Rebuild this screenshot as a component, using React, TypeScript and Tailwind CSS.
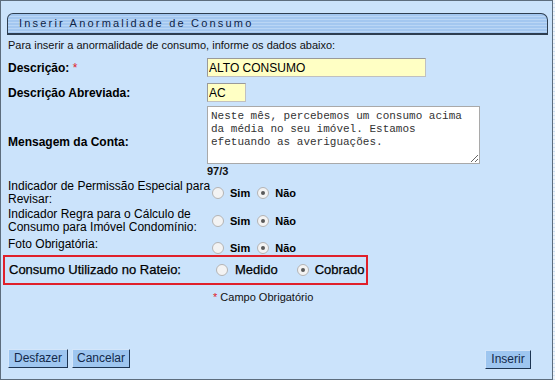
import React from 'react';

const font = "font-['Liberation_Sans',Arial,sans-serif]";

const Radio: React.FC<{ checked?: boolean }> = ({ checked }) => (
  <span className="ml-[5px] w-[12px] h-[12px] rounded-full border border-[#b4b4b4] bg-[#f3f3f3] flex items-center justify-center shrink-0">
    {checked && <span className="w-[4px] h-[4px] rounded-full bg-[#5a5a5a]" />}
  </span>
);

const SimNao: React.FC = () => (
  <div className="flex items-center text-[11px] font-bold text-black">
    <Radio />
    <span className="ml-[6px]">Sim</span>
    <span className="ml-[2px]"><Radio checked /></span>
    <span className="ml-[6px]">Não</span>
  </div>
);

const Button: React.FC<{ label: string; width: string }> = ({ label, width }) => (
  <button
    className={`${width} h-[19px] bg-[#9ec6f0] border border-t-[#d4e6fa] border-l-[#d4e6fa] border-b-[#1d3552] border-r-[#1d3552] text-[12px] text-[#13294a] leading-none`}
  >
    {label}
  </button>
);

const App: React.FC = () => {
  return (
    <div className={`w-[555px] h-[386px] bg-white flex ${font}`}>
      <div className="w-[553px] h-[380px] border border-[#5d6d7d] bg-[#cbe3fb] flex flex-col">
        {/* Header */}
        <div className="ml-[6px] mr-[4px] mt-[12px] h-[22px] rounded-tl-[6px] rounded-tr-[7px] border border-[#2e3e50] border-b-2 bg-[repeating-linear-gradient(180deg,#a3c7f0_0px,#a3c7f0_2px,#bad6f5_2px,#bad6f5_3px)] flex items-center pl-[11px]">
          <span className="text-[11px] tracking-[2.2px] text-[#0e2447]">Inserir Anormalidade de Consumo</span>
        </div>

        <div className="pl-[7px] mt-[4px] text-[11px] leading-[13px] text-[#111]">
          Para inserir a anormalidade de consumo, informe os dados abaixo:
        </div>

        {/* Descrição */}
        <div className="pl-[7px] mt-[6px] flex items-center h-[19px]">
          <div className="w-[199px] text-[12px] font-bold text-black">
            Descrição: <span className="text-[#e0202a] font-normal">*</span>
          </div>
          <input
            readOnly
            value="ALTO CONSUMO"
            className="w-[219px] h-[19px] bg-[#ffffc4] border border-[#c0c0c0] border-t-[#9a9a9a] border-l-[#9a9a9a] pl-[1px] text-[12px] text-black outline-none"
          />
        </div>

        {/* Descrição Abreviada */}
        <div className="pl-[7px] mt-[6px] flex items-center h-[19px]">
          <div className="w-[199px] text-[12px] font-bold text-black">Descrição Abreviada:</div>
          <input
            readOnly
            value="AC"
            className="w-[39px] h-[19px] bg-[#ffffc4] border border-[#c0c0c0] border-t-[#9a9a9a] border-l-[#9a9a9a] pl-[1px] text-[12px] text-black outline-none"
          />
        </div>

        {/* Mensagem da Conta */}
        <div className="pl-[7px] mt-[4px] flex items-center">
          <div className="w-[199px] text-[12px] font-bold text-black">Mensagem da Conta:</div>
          <div className="flex flex-col">
            <textarea
              readOnly
              defaultValue="Neste mês, percebemos um consumo acima da média no seu imóvel. Estamos efetuando as averiguações."
              className="w-[273px] h-[58px] bg-white border border-[#a9a9a9] p-[3px] font-['Liberation_Mono',monospace] text-[11px] leading-[13px] text-[#333] outline-none overflow-hidden"
            />
            <span className="text-[11px] font-bold leading-[13px] text-[#111] mt-px">97/3</span>
          </div>
        </div>

        {/* Indicador permissão */}
        <div className="pl-[7px] mt-[2px] flex items-center h-[26px]">
          <div className="w-[199px] text-[12px] leading-[13px] text-black whitespace-nowrap">
            Indicador de Permissão Especial para
            <br />
            Revisar:
          </div>
          <SimNao />
        </div>

        {/* Indicador regra */}
        <div className="pl-[7px] mt-[2px] flex items-center h-[26px]">
          <div className="w-[199px] text-[12px] leading-[13px] text-black whitespace-nowrap">
            Indicador Regra para o Cálculo de
            <br />
            Consumo para Imóvel Condomínio:
          </div>
          <SimNao />
        </div>

        {/* Foto */}
        <div className="pl-[7px] mt-[4px] flex items-start h-[13px]">
          <div className="w-[199px] text-[12px] leading-[13px] text-black">Foto Obrigatória:</div>
          <div className="mt-[2px]">
            <SimNao />
          </div>
        </div>

        {/* Consumo utilizado no rateio */}
        <div className="ml-[2px] mt-[4px] w-[365px] h-[30px] border-2 border-[#e0202a] flex items-center pl-[4px]">
          <div className="w-[202px] text-[13px] text-black [-webkit-text-stroke:0.25px_#000]">Consumo Utilizado no Rateio:</div>
          <div className="flex items-center text-[13px] text-black [-webkit-text-stroke:0.25px_#000]">
            <Radio />
            <span className="ml-[7px]">Medido</span>
            <span className="ml-[14px]"><Radio checked /></span>
            <span className="ml-[6px]">Cobrado</span>
          </div>
        </div>

        <div className="pl-[212px] mt-[6px] text-[11px] leading-[13px] text-[#111]">
          <span className="text-[#e0202a]">*</span> Campo Obrigatório
        </div>

        {/* Buttons */}
        <div className="mt-[42px] pl-[7px] pr-[21px] flex items-center">
          <div className="flex gap-[4px]">
            <Button label="Desfazer" width="w-[60px]" />
            <Button label="Cancelar" width="w-[58px]" />
          </div>
          <div className="ml-auto">
            <Button label="Inserir" width="w-[46px]" />
          </div>
        </div>
      </div>
      <div className="flex-1 h-[380px] bg-[repeating-linear-gradient(180deg,#eef4fb_0px,#eef4fb_3px,#cfe0f3_3px,#cfe0f3_4px)]" />
    </div>
  );
};

export default App;
